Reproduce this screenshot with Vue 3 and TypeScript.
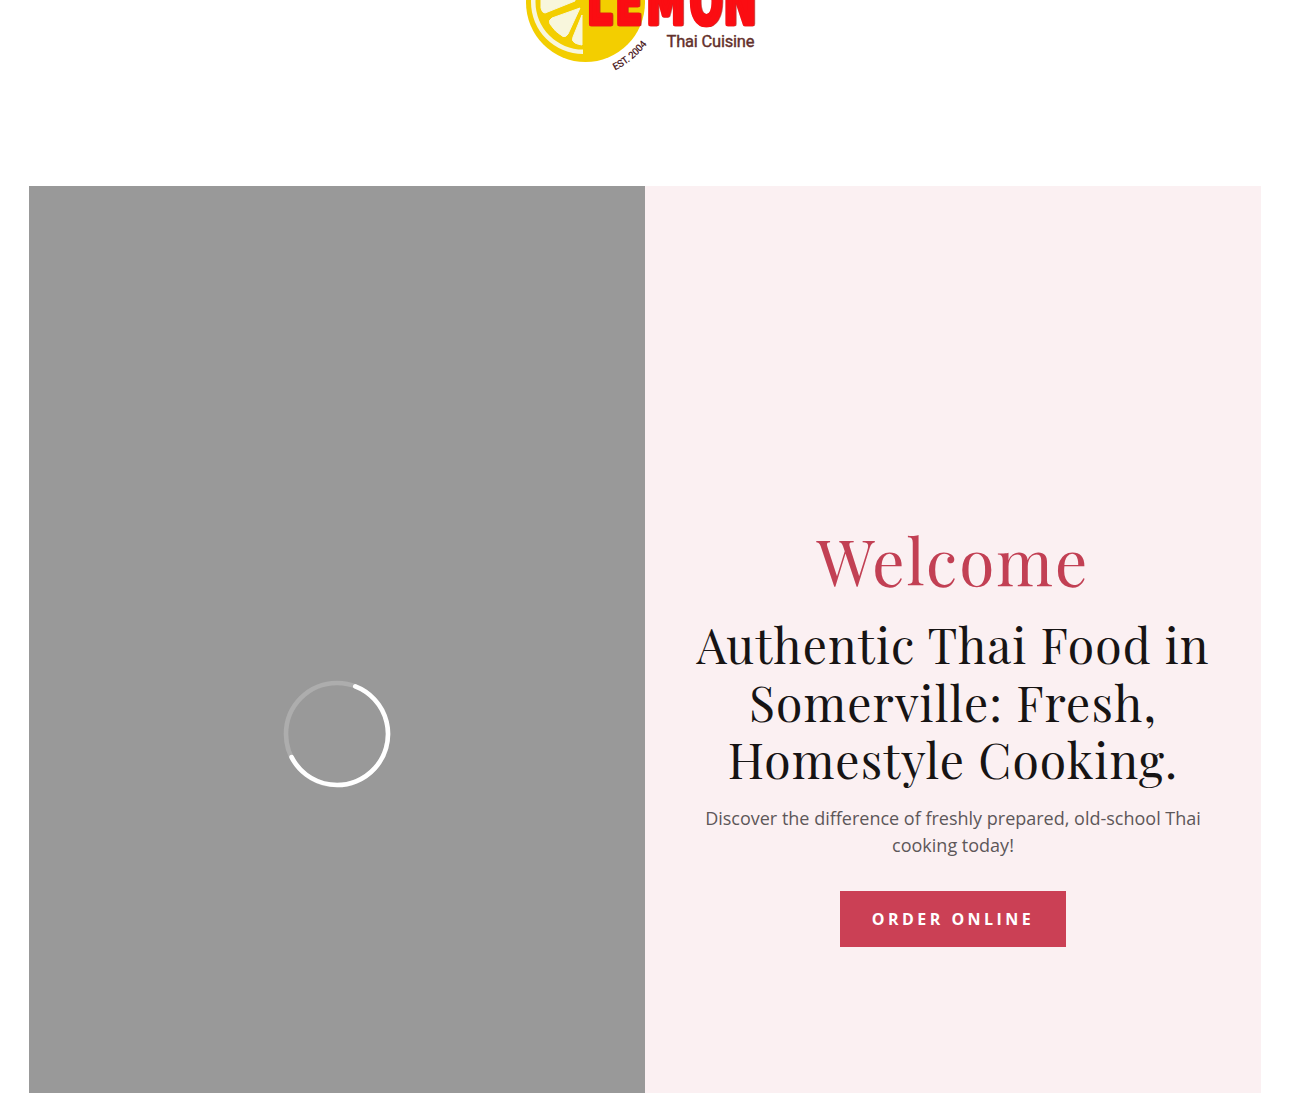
<template>
  <div class="page">
    <header class="site-header">
      <svg class="logo" viewBox="0 0 240 80" role="img" aria-label="Lemon Thai Cuisine">
        <circle class="lemon" cx="65.5" cy="2.5" r="59.5" />
        <path class="pith" d="M63 -50 A52 52 0 0 0 63 54 V49.5 A47.5 47.5 0 0 1 63 -45.5 Z" />
        <g class="segments">
          <path d="M55 1 L25 13 Q22 13 21 8 L21 -4 H55 Z" />
          <path d="M60 8 L32 18 Q28 20 30 24 Q35 32 43 36.5 Q46 37.5 48 34 Z" />
          <path d="M62 15 L53 37 Q51 41 55 43 Q58 44.5 62 45 Z" />
        </g>
        <text class="brand" x="95.7 135.9 180.3 242 290.7" y="24.3" transform="scale(0.7 1)">LEMON</text>
        <text class="cuisine" x="146.5" y="47" textLength="88">Thai Cuisine</text>
        <path id="est-arc" class="guide" d="M95 70.5 Q113 62 129 42" />
        <text class="est"><textPath href="#est-arc" textLength="42">EST. 2004</textPath></text>
      </svg>
    </header>

    <main class="hero">
      <section class="media">
        <svg class="spinner" viewBox="0 0 108 108">
          <circle class="track" cx="54" cy="54" r="51" />
          <path class="arc" :d="arcPath" />
        </svg>
      </section>
      <section class="intro">
        <h1>Welcome</h1>
        <h2>Authentic Thai Food in Somerville: Fresh, Homestyle Cooking.</h2>
        <p>Discover the difference of freshly prepared, old-school Thai cooking today!</p>
        <a class="order-button" href="#">ORDER ONLINE</a>
      </section>
    </main>
  </div>
</template>

<script setup lang="ts">
import { computed } from 'vue';

// Spinner arc, angles in degrees clockwise from 3 o'clock
const START = -69;
const END = 153;

const point = (angle: number): string => {
  const rad = (angle * Math.PI) / 180;
  return `${(54 + 51 * Math.cos(rad)).toFixed(2)} ${(54 + 51 * Math.sin(rad)).toFixed(2)}`;
};

const arcPath = computed(() => `M${point(START)} A51 51 0 1 1 ${point(END)}`);
</script>

<style>
body {
  margin: 0;
  background: #fff;
}
</style>

<style scoped>
.page {
  height: 100vh;
  overflow: hidden;
  background: #fff;
}

.site-header {
  display: flex;
  justify-content: center;
  width: 1280px;
  height: 186px;
}

.logo {
  width: 240px;
  height: 80px;
}

.lemon {
  fill: #f3ce00;
}

.pith,
.segments {
  fill: #f8f6dc;
}

.segments {
  stroke: #f8f6dc;
  stroke-width: 1;
  stroke-linejoin: round;
}

.brand {
  font-family: 'DejaVu Sans Condensed', 'DejaVu Sans', sans-serif;
  font-size: 62px;
  font-stretch: condensed;
  font-weight: 700;
  fill: #fb0d12;
  stroke: #fb0d12;
  stroke-width: 4;
  stroke-linejoin: round;
  vector-effect: non-scaling-stroke;
  filter: drop-shadow(1px 0.5px 0 #b51a18);
}

.cuisine {
  font-family: Roboto, sans-serif;
  font-size: 16.5px;
  font-weight: 400;
  fill: #63302b;
  stroke: #63302b;
  stroke-width: 0.4;
}

.guide {
  fill: none;
}

.est {
  font-family: Roboto, sans-serif;
  font-size: 10px;
  font-weight: 500;
  fill: #4d2024;
}

.hero {
  display: grid;
  grid-template-columns: 616px 616px;
  height: 1096px;
  margin-left: 29px;
}

.media {
  display: flex;
  align-items: center;
  justify-content: center;
  background: #999;
}

.spinner {
  width: 108px;
  height: 108px;
}

.track,
.arc {
  fill: none;
  stroke: #adadad;
  stroke-width: 4.6;
}

.arc {
  stroke: #fff;
  stroke-linecap: round;
}

.intro {
  box-sizing: border-box;
  display: flex;
  flex-direction: column;
  align-items: center;
  justify-content: center;
  padding: 0 48px;
  background: #fbf0f2;
  text-align: center;
}

h1,
h2 {
  margin: 0;
  font-family: 'Playfair Display', 'Liberation Serif', serif;
  font-weight: 400;
}

h1 {
  font-size: 64px;
  line-height: 77px;
  letter-spacing: 1.92px;
  color: #c24054;
}

h2 {
  margin-top: 18px;
  font-size: 48px;
  line-height: 57.6px;
  letter-spacing: 1.1px;
  color: #171414;
}

p {
  margin: 16px 0 32px;
  font-family: 'Open Sans', sans-serif;
  font-size: 18px;
  line-height: 27px;
  color: #5d5759;
}

.order-button {
  width: 226px;
  height: 56px;
  background: #cb4055;
  font-family: 'Open Sans', sans-serif;
  font-size: 16px;
  font-weight: 700;
  line-height: 56px;
  letter-spacing: 3.45px;
  text-decoration: none;
  white-space: nowrap;
  color: #fff;
}
</style>
